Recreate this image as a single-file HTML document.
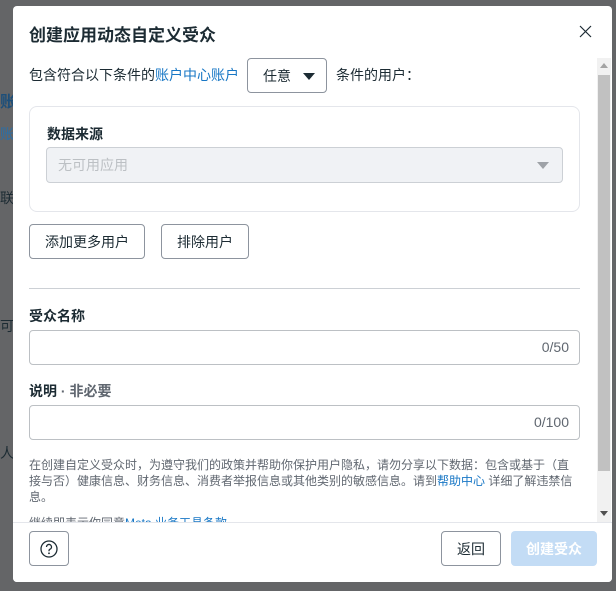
<!DOCTYPE html>
<html><head><meta charset="utf-8"><style>
*{box-sizing:border-box;margin:0;padding:0}
body{width:616px;height:591px;background:#646567;font-family:"Liberation Sans","Noto Sans CJK SC",sans-serif;position:relative;overflow:hidden;color:#1c2b33}
.bg{position:absolute;left:0;color:#1c2b33;font-size:14px}
.dlg{position:absolute;left:13px;top:6px;width:599px;height:576px;background:#fff;border-radius:4px;overflow:hidden}
.a{position:absolute}
.btn{position:absolute;border:1px solid #8d949e;border-radius:4px;background:#fff;font-size:14px;display:flex;align-items:center;justify-content:center;color:#1c2b33}
.inp{position:absolute;border:1px solid #bcc0c4;border-radius:4px;background:#fff;font-size:14px;color:#606770;text-align:right;padding-right:10px;line-height:33px}
.lbl{position:absolute;font-size:14px;font-weight:bold;color:#1c2b33}
</style></head><body>
<div class="bg" style="top:88px;color:#1d4f7a;font-weight:bold;font-size:16px">账</div>
<div class="bg" style="top:124px;color:#2a6fa8">账</div>
<div class="bg" style="top:188px">联</div>
<div class="bg" style="top:316px">可</div>
<div class="bg" style="top:443px">人</div>
<div class="dlg">
<div class="a" style="left:16px;top:15px;font-size:17px;font-weight:bold">创建应用动态自定义受众</div>
<svg class="a" style="left:566px;top:19px" width="13" height="13" viewBox="0 0 13 13"><path d="M1 1L12 12M12 1L1 12" stroke="#1c2b33" stroke-width="1.2"/></svg>
<div class="a" style="left:16px;top:59px;font-size:14px">包含符合以下条件的<span style="color:#1877c5">账户中心账户</span></div>
<div class="btn" style="left:234px;top:52px;width:80px;height:35px;justify-content:flex-start;padding-left:15px">任意<svg style="margin-left:12px" width="12" height="8"><path d="M0 1h12L6 8z" fill="#1c2b33"/></svg></div>
<div class="a" style="left:323px;top:59px;font-size:14px">条件的用户：</div>
<div class="a" style="left:584px;top:52px;width:14px;height:464px;background:#f1f1f1"></div>
<div class="a" style="left:585px;top:69px;width:12px;height:396px;background:#c1c1c1"></div>
<svg class="a" style="left:587px;top:57px" width="8" height="6"><path d="M0 5L4 0L8 5z" fill="#a3a3a3"/></svg>
<svg class="a" style="left:587px;top:505px" width="8" height="6"><path d="M0 0L8 0L4 5z" fill="#505050"/></svg>
<div class="a" style="left:16px;top:100px;width:551px;height:106px;border:1px solid #e4e6eb;border-radius:8px"></div>
<div class="lbl" style="left:34px;top:118px">数据来源</div>
<div class="a" style="left:33px;top:141px;width:517px;height:36px;background:#f0f2f5;border:1px solid #ccd0d5;border-radius:4px;font-size:14px;color:#bcc0c4;line-height:34px;padding-left:11px">无可用应用<svg style="position:absolute;right:13px;top:14px" width="12" height="7"><path d="M0 0h12L6 7z" fill="#9ea2a7"/></svg></div>
<div class="btn" style="left:16px;top:218px;width:116px;height:35px">添加更多用户</div>
<div class="btn" style="left:148px;top:218px;width:88px;height:35px">排除用户</div>
<div class="a" style="left:16px;top:282px;width:551px;height:1px;background:#ccd0d5"></div>
<div class="lbl" style="left:16px;top:300px">受众名称</div>
<div class="inp" style="left:16px;top:324px;width:551px;height:35px">0/50</div>
<div class="lbl" style="left:16px;top:375px">说明 <span style="color:#606770">· 非必要</span></div>
<div class="inp" style="left:16px;top:399px;width:551px;height:35px">0/100</div>
<div class="a" style="left:16px;top:451px;width:560px;font-size:12px;line-height:16px;color:#606770;white-space:nowrap">在创建自定义受众时，为遵守我们的政策并帮助你保护用户隐私，请勿分享以下数据：包含或基于（直<br>接与否）健康信息、财务信息、消费者举报信息或其他类别的敏感信息。请到<span style="color:#1877c5">帮助中心</span> 详细了解违禁信<br>息。</div>
<div class="a" style="left:16px;top:508px;font-size:12px;color:#606770">继续即表示你同意<span style="color:#1877c5">Meta 业务工具条款</span></div>
<div class="a" style="left:0;top:516px;width:599px;height:60px;background:#fff;border-top:1px solid #e4e6eb"></div>
<div class="btn" style="left:16px;top:525px;width:40px;height:35px"><svg width="18" height="18" viewBox="0 0 18 18"><circle cx="9" cy="9" r="8" fill="none" stroke="#1c2b33" stroke-width="1.3"/><path d="M6.5 7a2.5 2.5 0 1 1 3.3 2.3c-.6.3-.8.7-.8 1.4v.6" fill="none" stroke="#1c2b33" stroke-width="1.3"/><circle cx="9" cy="13.3" r=".9" fill="#1c2b33"/></svg></div>
<div class="btn" style="left:428px;top:525px;width:60px;height:35px">返回</div>
<div class="a" style="left:498px;top:525px;width:86px;height:35px;background:#c3dcf5;border-radius:4px;color:#fff;font-size:14px;font-weight:bold;display:flex;align-items:center;justify-content:center">创建受众</div>
</div>
</body></html>
